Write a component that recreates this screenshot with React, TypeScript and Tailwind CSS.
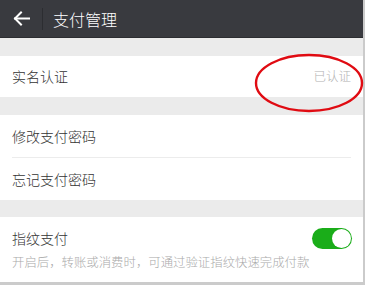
import React from "react";

const font = { fontFamily: '"Noto Sans CJK SC", "Noto Sans", sans-serif' };

export default function App() {
  return (
    <div className="w-[365px] h-[285px] bg-[#cbcbcb] pr-[2px] pb-[3px] relative" style={font}>
      <div className="w-[363px] h-[282px] bg-[#ebebeb] flex flex-col">
        {/* Header */}
        <div className="h-[38px] bg-[#393a3f] border-b border-[#2c2d31] flex items-center shrink-0">
          <div className="w-[42px] flex items-center justify-center">
            <svg width="17" height="15" viewBox="0 0 17 15" fill="none" stroke="white" strokeWidth="2" strokeLinecap="square">
              <path d="M16 7.5H2" />
              <path d="M8 1.5L2 7.5l6 6" />
            </svg>
          </div>
          <div className="w-px h-[22px] bg-[#2c2d31]" />
          <span className="ml-[10px] text-white text-[16px] font-light">支付管理</span>
        </div>

        <div className="h-[18px] shrink-0" />

        <div className="h-[41px] bg-white px-3 flex items-center justify-between shrink-0">
          <span className="text-[14px] text-[#333] font-light">实名认证</span>
          <span className="text-[12.5px] text-[#b2b2b2] font-light">已认证</span>
        </div>

        <div className="h-[18px] shrink-0" />

        <div className="bg-white shrink-0">
          <div className="h-[42px] px-3 flex items-center">
            <span className="text-[14px] text-[#333] font-light">修改支付密码</span>
          </div>
          <div className="mx-3 h-px bg-[#ececec]" />
          <div className="h-[42px] px-3 flex items-center">
            <span className="text-[14px] text-[#333] font-light">忘记支付密码</span>
          </div>
        </div>

        <div className="h-[17px] shrink-0" />

        <div className="flex-1 bg-white px-3 pt-[11px]">
          <div className="flex items-center justify-between">
            <span className="text-[14px] text-[#333] font-light">指纹支付</span>
            <div className="w-[40px] h-[21px] rounded-full bg-[#1aad19] flex items-center justify-end pr-[1px] mr-[-1px]">
              <div className="w-[19px] h-[19px] rounded-full bg-white" />
            </div>
          </div>
          <div className="mt-[4px] text-[12.4px] text-[#aaaaaa] font-light whitespace-nowrap">
            开启后，转账或消费时，可通过验证指纹快速完成付款
          </div>
        </div>
      </div>

      {/* red annotation ellipse */}
      <svg className="absolute left-[254px] top-[52px]" width="111" height="62" viewBox="0 0 111 62" fill="none">
        <ellipse cx="55" cy="31" rx="53" ry="28" stroke="#e00b12" strokeWidth="2.4" />
      </svg>
    </div>
  );
}
